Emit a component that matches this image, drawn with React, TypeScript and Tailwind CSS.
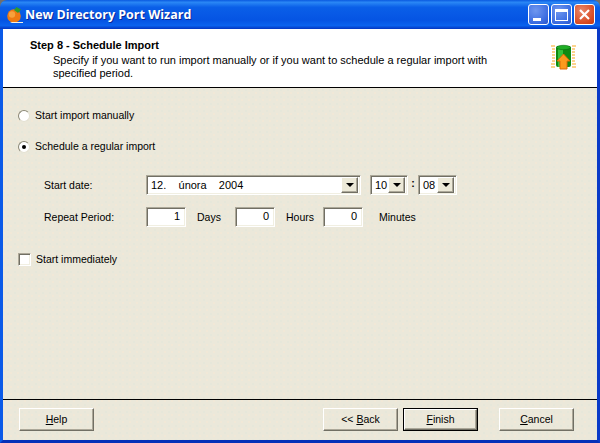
const sunken =
  'border border-t-[#aca899] border-l-[#aca899] border-r-white border-b-white shadow-[inset_1px_1px_0_#716f64,inset_-1px_-1px_0_#f1efe2] bg-white'
const raised =
  'border border-t-white border-l-white border-r-[#716f64] border-b-[#716f64] shadow-[inset_-1px_-1px_0_#aca899]'

function OrangeIcon() {
  return (
    <svg width="18" height="18" viewBox="0 0 18 18" className="shrink-0">
      <circle cx="8" cy="10" r="6.8" fill="#ee7a12" />
      <circle cx="6" cy="8.5" r="3.2" fill="#f7a13c" />
      <path d="M8 4 L10.5 1 L15 3.5 L12 7 Z" fill="#2f9a2c" />
      <path d="M4 16 H17 V17 H6 Z" fill="#f4efe0" />
    </svg>
  )
}

function CylinderIcon() {
  return (
    <svg width="26" height="26" viewBox="0 0 26 26">
      <path d="M0 2h4M1 5h3M1 8h3M1 11h3M1 14h3M1 17h3M0 20h4M0 23h4M21 2h4M21 5h3M21 8h3M21 11h3M21 14h3M21 17h3M21 20h4M21 23h4" stroke="#fbc56a" strokeWidth="1.4" />
      <rect x="5" y="2" width="15" height="21" rx="2" fill="#0f8a12" />
      <rect x="7" y="2" width="5" height="21" fill="#35c23a" />
      <ellipse cx="12.5" cy="3.5" rx="7" ry="2.2" fill="#1fae25" stroke="#0a6a0d" strokeWidth="0.6" />
      <path d="M12.5 10 L19 17 H16 V25 H9 V17 H6 Z" fill="#fb9a1d" stroke="#dd6a05" />
    </svg>
  )
}

function DropButton() {
  return (
    <div className={`w-[17px] h-[16px] bg-[#ece9d8] flex items-center justify-center ${raised}`}>
      <svg width="8" height="4" viewBox="0 0 8 4">
        <path d="M0 0H8L4 4Z" fill="#000" />
      </svg>
    </div>
  )
}

function Combo({ value, width }: { value: string; width: string }) {
  return (
    <div className={`${width} h-[20px] p-[2px] flex items-center justify-between ${sunken}`}>
      <span className="pl-[2px] pt-[1px] text-black text-[11px] whitespace-pre">{value}</span>
      <DropButton />
    </div>
  )
}

function NumField({ value, label, width, gap }: { value: string; label: string; width: string; gap: string }) {
  return (
    <div className={`flex items-center ${width}`}>
      <div className={`w-[40px] h-[20px] shrink-0 pr-[5px] text-right text-[11px] leading-[17px] ${sunken}`}>{value}</div>
      <span className={`${gap} pt-[2px]`}>{label}</span>
    </div>
  )
}

function Radio({ checked }: { checked?: boolean }) {
  return (
    <div className="w-[12px] h-[12px] rounded-full bg-white border border-t-[#8a8775] border-l-[#8a8775] border-r-[#e4e1d2] border-b-[#e4e1d2] flex items-center justify-center shrink-0">
      {checked && <div className="w-[4px] h-[4px] rounded-full bg-black" />}
    </div>
  )
}

function WizardButton({ children, isDefault }: { children: React.ReactNode; isDefault?: boolean }) {
  return (
    <div className={`w-[75px] h-[23px] ${isDefault ? 'border border-black' : ''}`}>
      <div className={`w-full h-full flex items-center justify-center text-black ${raised}`}>{children}</div>
    </div>
  )
}

function CaptionButton({ kind }: { kind: 'min' | 'max' | 'close' }) {
  const bg =
    kind === 'close'
      ? 'bg-[radial-gradient(circle_at_35%_30%,#e9876a,#d84a22_70%,#c33a14)]'
      : 'bg-[radial-gradient(circle_at_35%_30%,#6f97ef,#3a6be0_70%,#2a54c8)]'
  return (
    <div className={`w-[21px] h-[21px] rounded-[3px] border border-white flex items-center justify-center ${bg}`}>
      {kind === 'min' && <div className="w-[8px] h-[3px] bg-white mt-[9px] mr-[3px]" />}
      {kind === 'max' && <div className="w-[13px] h-[12px] border border-white border-t-[3px]" />}
      {kind === 'close' && (
        <svg width="13" height="13" viewBox="0 0 13 13">
          <path d="M2 2L11 11M11 2L2 11" stroke="#fff" strokeWidth="2.2" />
        </svg>
      )}
    </div>
  )
}

export default function App() {
  return (
    <div className="w-[600px] h-[443px] bg-[#6f6f6f] font-['Liberation_Sans',sans-serif] text-[10.5px] text-black overflow-hidden">
      <div className="w-full h-full rounded-t-[7px] overflow-hidden flex flex-col">
        {/* title bar */}
        <div className="h-[29px] shrink-0 pl-[6px] pr-[5px] flex items-center bg-[linear-gradient(#0a5ae0,#2a87f5_8%,#0a5fe8_25%,#0554e3_70%,#0a62ee_88%,#0335c0)]">
          <OrangeIcon />
          <span className="ml-[1px] pt-[2px] font-['Open_Sans',sans-serif] font-bold text-[12.5px] text-white [text-shadow:1px_1px_0_#0a2a9a]">
            New Directory Port Wizard
          </span>
          <div className="ml-auto flex gap-[2px]">
            <CaptionButton kind="min" />
            <CaptionButton kind="max" />
            <CaptionButton kind="close" />
          </div>
        </div>

        {/* client area */}
        <div className="flex-1 border-l-[3px] border-l-[#0a5ae8] border-r-[3px] border-r-[#0a3ac8] border-b-[3px] border-b-[#0530b8] flex flex-col min-h-0 bg-[#ebe8da] bg-[radial-gradient(circle_at_1px_1px,#f1e8d7_1px,transparent_1px),radial-gradient(circle_at_5px_5px,#e6e7da_1px,transparent_1px)] bg-[length:7px_7px]">
          <div className="h-[59px] shrink-0 bg-white border-b border-black flex justify-between pl-[27px] pr-[20px] text-[11px]">
            <div className="pt-[9px]">
              <div className="font-bold leading-[14px]">Step 8 - Schedule Import</div>
              <div className="pl-[23px] pt-[2px] leading-[13px]">
                Specify if you want to run import manually or if you want to schedule a regular import with
                <br />
                specified period.
              </div>
            </div>
            <div className="pt-[15px]">
              <CylinderIcon />
            </div>
          </div>

          <div className="flex-1 pl-[15px] pr-[15px] pt-[21px] flex flex-col">
            <div className="flex items-center gap-[5px] h-[13px]">
              <Radio />
              <span>Start import manually</span>
            </div>
            <div className="flex items-center gap-[5px] h-[13px] mt-[18px]">
              <Radio checked />
              <span>Schedule a regular import</span>
            </div>

            <div className="flex items-center mt-[22px] pl-[26px]">
              <span className="w-[102px] pt-[2px]">Start date:</span>
              <Combo value="12.    února    2004" width="w-[215px]" />
              <div className="ml-[9px]">
                <Combo value="10" width="w-[38px]" />
              </div>
              <span className="w-[10px] text-center font-bold pb-[3px]">:</span>
              <Combo value="08" width="w-[39px]" />
            </div>

            <div className="flex items-center mt-[12px] pl-[26px]">
              <span className="w-[102px] pt-[2px]">Repeat Period:</span>
              <NumField value="1" label="Days" width="w-[89px]" gap="pl-[11px]" />
              <NumField value="0" label="Hours" width="w-[88px]" gap="pl-[11px]" />
              <NumField value="0" label="Minutes" width="" gap="pl-[16px]" />
            </div>

            <div className="flex items-center gap-[5px] mt-[25px]">
              <div className={`w-[13px] h-[13px] ${sunken}`} />
              <span>Start immediately</span>
            </div>
          </div>

          <div className="h-[41px] shrink-0 border-t border-black pl-[16px] pr-[23px] pt-[8px] flex">
            <WizardButton>
              <span>
                <u>H</u>elp
              </span>
            </WizardButton>
            <div className="ml-auto flex">
              <WizardButton>
                <span>
                  &lt;&lt; <u>B</u>ack
                </span>
              </WizardButton>
              <div className="ml-[5px]">
                <WizardButton isDefault>
                  <span>
                    <u>F</u>inish
                  </span>
                </WizardButton>
              </div>
              <div className="ml-[21px]">
                <WizardButton>
                  <span>
                    <u>C</u>ancel
                  </span>
                </WizardButton>
              </div>
            </div>
          </div>
        </div>
      </div>
    </div>
  )
}
